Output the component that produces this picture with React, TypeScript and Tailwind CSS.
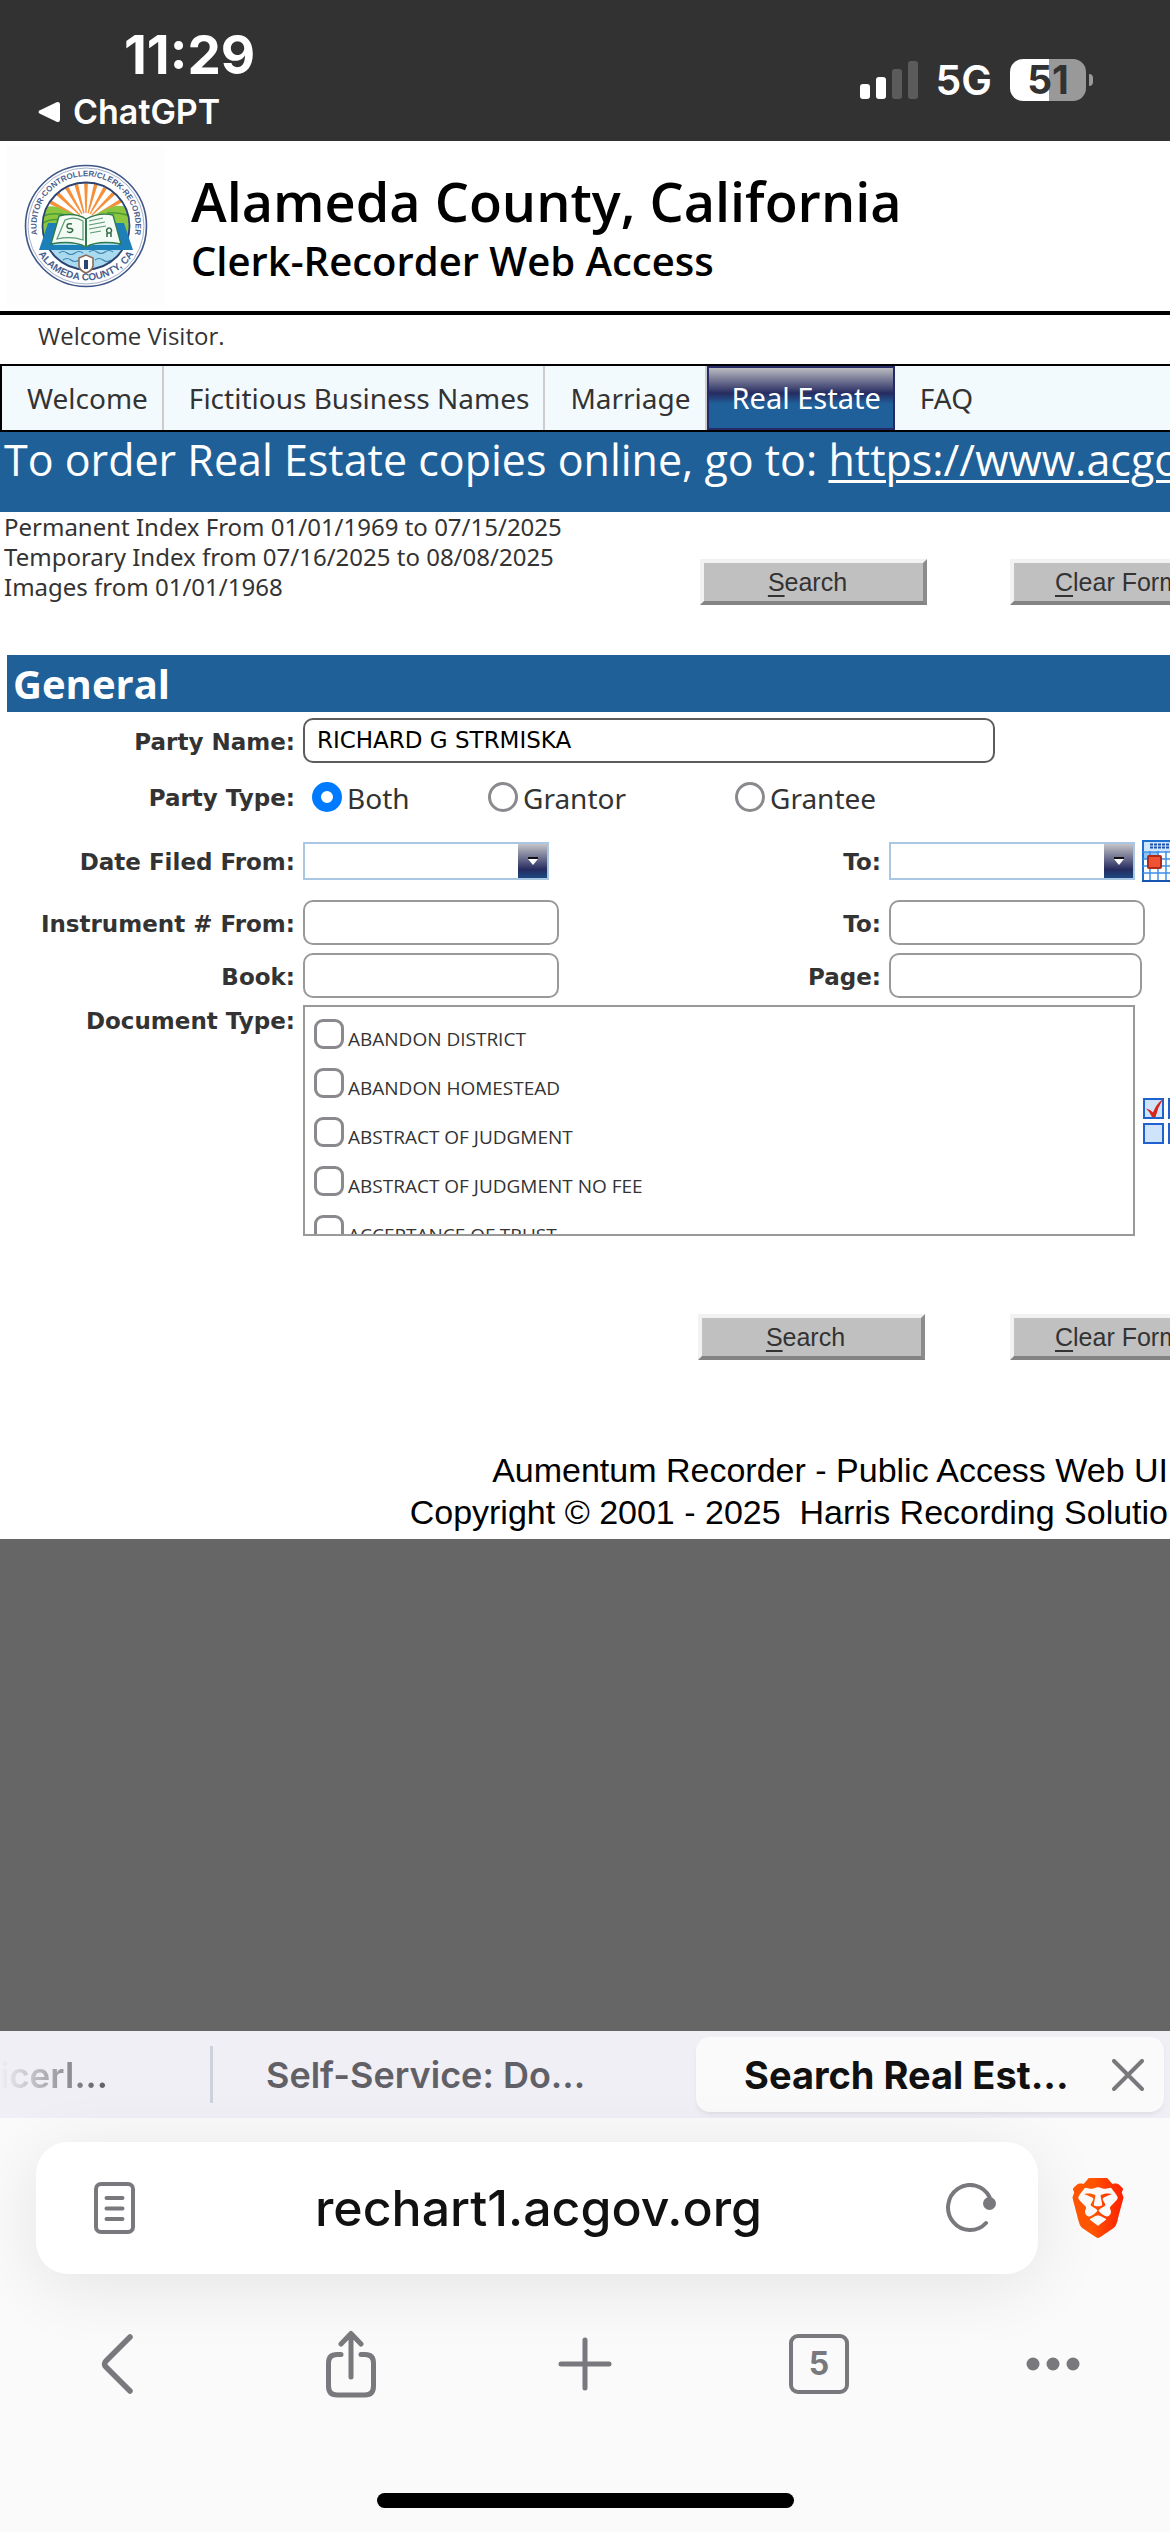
import React from "react";
import { SiBrave } from "react-icons/si";

const navItems = ["Welcome", "Fictitious Business Names", "Marriage", "Real Estate", "FAQ"];

const documentTypes = [
  "ABANDON DISTRICT",
  "ABANDON HOMESTEAD",
  "ABSTRACT OF JUDGMENT",
  "ABSTRACT OF JUDGMENT NO FEE",
  "ACCEPTANCE OF TRUST",
];

const labelClass =
  "pt-0.5 text-right font-['DejaVu_Sans',sans-serif] text-[23px] font-bold leading-7 text-[#333333]";
const textboxClass = "h-[45px] rounded-[10px] border-2 border-[#999999] bg-white outline-none";
const rowClass = "grid grid-cols-[295px_256px_314px_256px_auto] items-center gap-x-2";

function StatusBar() {
  return (
    <header className="flex h-[141px] shrink-0 justify-between bg-[#323232] font-['Inter',sans-serif] text-white">
      <div className="flex flex-col pt-[26px]">
        <time className="pl-[124px] text-[53px] font-bold leading-[58px]">11:29</time>
        <a href="#chatgpt" className="flex items-center gap-3 pl-[38px] pt-2 text-[34px] font-semibold leading-10">
          <svg width="23" height="22" viewBox="0 0 23 22" aria-hidden="true">
            <path d="M2 9.2 18.6 1.2Q22 0 22 3.500V18.500Q22 22 18.600 20.800L2 12.800Q-1 11 2 9.200Z" fill="white" />
          </svg>
          ChatGPT
        </a>
      </div>
      <div className="flex items-center pr-[77px] pt-[18px]">
        <svg width="58" height="38" viewBox="0 0 58 38" role="img" aria-label="Signal">
          <rect x="0" y="23" width="10" height="15" rx="3" fill="white" />
          <rect x="16" y="16" width="10" height="22" rx="3" fill="white" />
          <rect x="32" y="8" width="10" height="30" rx="3" fill="#5b5b5b" />
          <rect x="48" y="0" width="10" height="38" rx="3" fill="#5b5b5b" />
        </svg>
        <span className="ml-[18px] text-[41px] font-semibold leading-[42px]">5G</span>
        <div className="ml-[18px] flex h-[42px] w-[76px] items-center justify-center rounded-[13px] bg-[linear-gradient(90deg,#ffffff_51%,#999999_51%)] text-[39px] font-bold leading-[42px] text-[#323232]">
          51
        </div>
        <div className="ml-[3px] h-3 w-1 rounded-r-full bg-[#999999]" />
      </div>
    </header>
  );
}

function Seal() {
  const rays = [-78, -62, -46, -30, -15, 0, 15, 30, 45, 60, 75];
  return (
    <svg width="126" height="126" viewBox="0 0 126 126" role="img" aria-label="County seal">
      <defs>
        <path id="sealTop" d="M17 81A49.500 49.500 0 1 1 109 81" />
        <path id="sealBottom" d="M11 83A56.500 56.500 0 0 0 115 83" />
        <clipPath id="sealInner">
          <circle cx="63" cy="63" r="43" />
        </clipPath>
      </defs>
      <circle cx="63" cy="63" r="60.500" fill="white" stroke="#3f5688" strokeWidth="1.600" />
      <circle cx="63" cy="63" r="58" fill="none" stroke="#a4b0ca" strokeWidth="1" />
      <g clipPath="url(#sealInner)">
        <rect x="18" y="18" width="90" height="90" fill="white" />
        {rays.map((a) => (
          <path key={a} d="M62.400 50 60.600 8H65.400L63.600 50Z" fill="#f5913a" transform={`rotate(${a} 63 58)`} />
        ))}
        <path d="M18 46Q30 40 40 47Q50 49 56 56L56 76H18Z" fill="#8cc63f" />
        <path d="M108 46Q96 40 86 45Q76 48 70 55L70 76H108Z" fill="#8cc63f" />
        <path d="M18 54Q30 48 46 53M108 53Q96 49 84 50M20 60Q30 54 42 58" fill="none" stroke="#4a9a3c" strokeWidth="1.500" />
        <rect x="18" y="80" width="90" height="28" fill="#a9daf0" />
        <path d="M36 90q4-3 8 0t8 0t8 0M66 89q4-3 8 0t8 0t8 0M40 97q4-3 8 0t8 0M72 97q4-3 8 0t8 0" fill="none" stroke="#3d84ad" strokeWidth="1.200" />
      </g>
      <circle cx="63" cy="63" r="43.500" fill="none" stroke="#2c4472" strokeWidth="1.800" />
      <path d="M25 60H36L30 82H56Q60 82 63 84Q66 82 70 82H96L90 60H101L110 87H16Z" fill="#1c7fb8" />
      <path d="M36 53Q52 49 63 56Q76 49 90 52L98 81Q75 77 63 84Q50 77 28 81Z" fill="#f4fbf4" stroke="#2f7a4d" strokeWidth="1.400" />
      <path d="M63 56V83" stroke="#2f7a4d" strokeWidth="2" />
      <path d="M42 57Q52 53 60 58V77Q48 73 34 76ZM66 58L80 55M66 62L82 59M66 66L83 63M67 70L78 68" fill="none" stroke="#5c9a76" strokeWidth="1.200" />
      <path d="M49 61q-5-1-5 2t4 2.500q3 1 1 3t-5 0M86 65a2.500 2.500 0 1 0 .1 0M84 70v4M88 70v4" fill="none" stroke="#2f6b45" strokeWidth="1.500" />
      <path d="M56 95 63 92 70 95V103Q69 108 63 110Q57 108 56 103Z" fill="white" stroke="#8c6a5d" strokeWidth="1.600" />
      <path d="M61 97h4v9h-4z" fill="#2c4472" />
      <g fontFamily="Liberation Sans, sans-serif" fill="#4b5f8e">
        <text fontSize="8" fontWeight="700">
          <textPath href="#sealTop" startOffset="50%" textAnchor="middle">
            AUDITOR-CONTROLLER/CLERK-RECORDER
          </textPath>
        </text>
        <text fontSize="10" fontWeight="700">
          <textPath href="#sealBottom" startOffset="50%" textAnchor="middle">
            ALAMEDA COUNTY, CA
          </textPath>
        </text>
      </g>
    </svg>
  );
}

function SiteHeader() {
  return (
    <div className="flex h-[174px] border-b-4 border-black bg-white">
      <div className="ml-1.5 mt-[5px] flex h-40 w-[159px] items-center justify-center bg-[#fdfdfd]">
        <Seal />
      </div>
      <div className="whitespace-nowrap pl-[26px] pt-[30px] font-['Open_Sans',sans-serif] font-semibold text-black">
        <h1 className="text-[54px] leading-[60px]">Alameda County, California</h1>
        <h2 className="pt-[7px] text-[40px] leading-[46px]">Clerk-Recorder Web Access</h2>
      </div>
    </div>
  );
}

function SiteNav() {
  return (
    <nav className="flex h-[68px] overflow-hidden whitespace-nowrap border-y-2 border-l-2 border-black bg-[#f3fafe] font-['Noto_Sans',sans-serif] text-[28px] text-[#333333]">
      {navItems.map((item) =>
        item === "Real Estate" ? (
          <a
            key={item}
            href="#real-estate"
            aria-current="page"
            className="flex items-center border-2 border-[#242b66] bg-[linear-gradient(180deg,#bcbcc2_0%,#262b60_42%,#20609a_60%)] pl-[23px] pr-3 text-[29px] text-white"
          >
            {item}
          </a>
        ) : (
          <a
            key={item}
            href={"#" + item.toLowerCase().replace(/ /g, "-")}
            className="flex items-center border-r-2 border-[#cccccc] pl-[25px] pr-[14px] last:border-r-0"
          >
            {item}
          </a>
        ),
      )}
    </nav>
  );
}

function FormButton({ accessKey, rest }: { accessKey: string; rest: string }) {
  return (
    <button
      type="button"
      className="h-[46px] w-[227px] shrink-0 whitespace-nowrap border-4 border-b-[#848484] border-l-[#f2f2f2] border-r-[#8c8c8c] border-t-[#f2f2f2] bg-[#c0c0c0] pr-3 text-center font-['Liberation_Sans',Arial,sans-serif] text-[25px] leading-[34px] text-[#333333]"
    >
      <span className="underline decoration-2 underline-offset-4">{accessKey}</span>
      {rest}
    </button>
  );
}

function DateField({ id }: { id: string }) {
  return (
    <div className="flex h-[38px] w-[246px] shrink-0 border-2 border-[#a9c6e3] bg-white">
      <input id={id} type="text" className="min-w-0 flex-1 outline-none" />
      <button
        type="button"
        aria-label="Show dates"
        className="flex w-[29px] items-center justify-center bg-[linear-gradient(180deg,#c4c4c8_0%,#262b60_75%,#1d4a80_100%)]"
      >
        <svg width="10" height="8" viewBox="0 0 10 8" aria-hidden="true">
          <path d="M0 0H10V2H0Z" fill="#111111" />
          <path d="M0 2H10L5 8Z" fill="white" />
        </svg>
      </button>
    </div>
  );
}

function CalendarIcon() {
  const lines = [12, 19, 26, 33];
  return (
    <svg width="42" height="42" viewBox="0 0 42 42" aria-hidden="true">
      <rect x="1" y="1" width="40" height="40" fill="white" stroke="#1f6fd0" strokeWidth="2" />
      <rect x="2" y="2" width="38" height="9" fill="#cfe6fb" />
      <path d="M8 4.500H36M8 7.500H36" stroke="#1f4fae" strokeWidth="2" strokeDasharray="3 1" />
      <rect x="2" y="12" width="15" height="7" fill="#8fc3f5" />
      {lines.map((y) => (
        <path key={y} d={`M1 ${y}H41`} stroke="#3d8fe8" strokeWidth="1.500" />
      ))}
      {[8, 16, 24, 32].map((x) => (
        <path key={x} d={`M${x} 11V41`} stroke="#3d8fe8" strokeWidth="1.500" />
      ))}
      <rect x="6" y="16" width="13" height="12" rx="1" fill="#ee5336" stroke="#b02a17" strokeWidth="2" />
      <path d="M0 41H42" stroke="#1756b0" strokeWidth="2" />
    </svg>
  );
}

function CheckGridIcon() {
  const cells = [
    [1, 1],
    [26, 1],
    [1, 26],
    [26, 26],
  ];
  return (
    <svg width="46" height="46" viewBox="0 0 46 46" aria-hidden="true">
      {cells.map(([x, y]) => (
        <rect key={`${x}-${y}`} x={x} y={y} width="19" height="19" fill="#cfe3fa" stroke="#1f62cf" strokeWidth="2" />
      ))}
      <path d="M3 10.500 7 12 10 14.500Q13 6 20 1Q15 9 12.500 19H9Q7 14 3 10.500Z" fill="#d8261a" />
      <path d="M30 38H42" stroke="#d8261a" strokeWidth="2" />
    </svg>
  );
}

function Radio({ label, checked }: { label: string; checked?: boolean }) {
  return (
    <label className="flex items-center gap-[5px]">
      <input
        type="radio"
        name="partyType"
        defaultChecked={checked}
        className="h-[30px] w-[30px] appearance-none rounded-full border-3 border-[#8a8a8e] bg-white checked:border-[9px] checked:border-[#007aff]"
      />
      <span className="pt-0.5">{label}</span>
    </label>
  );
}

function SearchForm() {
  return (
    <form className="overflow-hidden bg-white">
      <div className="flex h-[143px]">
        <p className="w-[700px] shrink-0 pl-1 font-['Noto_Sans',sans-serif] text-[24px] leading-[30px] text-[#333333]">
          Permanent Index From 01/01/1969 to 07/15/2025
          <br />
          Temporary Index from 07/16/2025 to 08/08/2025
          <br />
          Images from 01/01/1968
        </p>
        <div className="flex gap-[83px] pt-[47px]">
          <FormButton accessKey="S" rest="earch" />
          <FormButton accessKey="C" rest="lear Form" />
        </div>
      </div>

      <h3 className="ml-[7px] h-[57px] bg-[#206099] pl-[6px] font-['Open_Sans',sans-serif] text-[40px] font-bold leading-[57px] text-white">
        General
      </h3>

      <div className={`mt-1.5 ${rowClass}`}>
        <label htmlFor="partyName" className={labelClass}>Party Name:</label>
        <input
          id="partyName"
          type="text"
          defaultValue="RICHARD G STRMISKA"
          className="col-span-4 h-[45px] w-[692px] rounded-[10px] border-2 border-[#5c5c5c] bg-white px-3 pb-0.5 font-['DejaVu_Sans',sans-serif] text-[23px] text-black outline-none"
        />
      </div>

      <div className={`h-[68px] ${rowClass}`}>
        <span id="partyTypeLabel" className={labelClass}>Party Type:</span>
        <div
          role="radiogroup"
          aria-labelledby="partyTypeLabel"
          className="col-span-4 grid grid-cols-[176px_247px_auto] pl-[9px] font-['Noto_Sans',sans-serif] text-[28px] leading-9 text-[#333333]"
        >
          <Radio label="Both" checked />
          <Radio label="Grantor" />
          <Radio label="Grantee" />
        </div>
      </div>

      <div className={`mt-[9px] ${rowClass}`}>
        <label htmlFor="dateFrom" className={labelClass}>Date Filed From:</label>
        <DateField id="dateFrom" />
        <label htmlFor="dateTo" className={labelClass}>To:</label>
        <div className="col-span-2 flex items-center gap-[7px]">
          <DateField id="dateTo" />
          <button type="button" aria-label="Open calendar" className="shrink-0">
            <CalendarIcon />
          </button>
        </div>
      </div>

      <div className={`mt-[18px] ${rowClass}`}>
        <label htmlFor="instrumentFrom" className={labelClass}>Instrument # From:</label>
        <input id="instrumentFrom" type="text" className={textboxClass} />
        <label htmlFor="instrumentTo" className={labelClass}>To:</label>
        <input id="instrumentTo" type="text" className={textboxClass} />
      </div>

      <div className={`mt-2 ${rowClass}`}>
        <label htmlFor="book" className={labelClass}>Book:</label>
        <input id="book" type="text" className={textboxClass} />
        <label htmlFor="page" className={labelClass}>Page:</label>
        <input id="page" type="text" className={`w-[253px] ${textboxClass}`} />
      </div>

      <div className="mt-[7px] flex gap-2">
        <span id="documentTypeLabel" className={`w-[295px] shrink-0 ${labelClass}`}>Document Type:</span>
        <div
          role="group"
          aria-labelledby="documentTypeLabel"
          className="h-[231px] w-[832px] shrink-0 overflow-hidden border-2 border-[#999999] pl-[9px] pt-3"
        >
          {documentTypes.map((name) => (
            <label
              key={name}
              className="flex h-[49px] gap-1 font-['Open_Sans',sans-serif] text-[19px] leading-10 text-[#333333]"
            >
              <input
                type="checkbox"
                className="h-[30px] w-[30px] appearance-none rounded-[9px] border-3 border-[#8a8a8e] bg-white"
              />
              {name}
            </label>
          ))}
        </div>
        <button type="button" aria-label="Select all document types" className="mt-[93px] h-[46px] shrink-0">
          <CheckGridIcon />
        </button>
      </div>

      <div className="flex gap-[85px] pl-[698px] pt-[78px]">
        <FormButton accessKey="S" rest="earch" />
        <FormButton accessKey="C" rest="lear Form" />
      </div>

      <footer className="whitespace-pre pb-1.5 pr-0.5 pt-[89px] text-right font-['Liberation_Sans',Arial,sans-serif] text-[34px] leading-[42px] text-black">
        <p>Aumentum Recorder - Public Access Web UI</p>
        <p>Copyright © 2001 - 2025  Harris Recording Solutio</p>
      </footer>
    </form>
  );
}

function TabStrip() {
  return (
    <div className="flex h-[87px] items-center overflow-hidden whitespace-nowrap bg-[#f0eff5] text-[36px] leading-[50px]">
      <button
        type="button"
        className="w-[210px] shrink-0 bg-[linear-gradient(90deg,#f0eff5_0px,#636368_100px)] bg-clip-text text-left text-[35px] font-semibold text-transparent"
      >
        icerI...
      </button>
      <div className="h-[57px] w-[3px] bg-[#ccd2dc]" />
      <button type="button" className="flex-1 pl-[53px] text-left font-semibold text-[#606066]">
        Self-Service: Do...
      </button>
      <div className="mr-1.5 flex h-[75px] w-[468px] items-center justify-between rounded-[14px] bg-[#fafafa] pl-12 pr-5 shadow-md shadow-black/5">
        <button type="button" className="text-[38px] font-bold text-[#111111]">Search Real Est...</button>
        <button type="button" aria-label="Close tab">
          <svg width="32" height="32" viewBox="0 0 32 32" aria-hidden="true">
            <path d="M2 2 30 30M30 2 2 30" stroke="#78787d" strokeWidth="4" strokeLinecap="round" />
          </svg>
        </button>
      </div>
    </div>
  );
}

function AddressRow() {
  return (
    <div className="flex pl-9 pt-6">
      <div className="flex h-[132px] flex-1 items-center justify-between rounded-[32px] bg-white pl-[58px] pr-[42px] shadow-[0_12px_70px_rgba(0,0,0,0.09)]">
        <button type="button" aria-label="Reader view">
          <svg width="41" height="52" viewBox="0 0 41 52" fill="none" stroke="#78787d" strokeWidth="4" strokeLinecap="round" aria-hidden="true">
            <rect x="2" y="2" width="37" height="48" rx="5" />
            <path d="M12.500 16H28.500M12.500 26.500H28.500M12.500 37H28.500" />
          </svg>
        </button>
        <button type="button" className="pr-1 text-[50px] font-medium leading-[60px] text-[#111111]">
          rechart1.acgov.org
        </button>
        <button type="button" aria-label="Reload">
          <svg width="50" height="50" viewBox="0 0 50 50" aria-hidden="true">
            <path d="M43.500 14A22 22.500 0 1 0 40 40" fill="none" stroke="#78787d" strokeWidth="4" strokeLinecap="round" />
            <circle cx="43.500" cy="20.500" r="6.500" fill="#78787d" />
          </svg>
        </button>
      </div>
      <button type="button" aria-label="Brave Shields" className="flex w-[132px] items-center justify-center pr-3">
        <svg width="0" height="0" aria-hidden="true">
          <defs>
            <linearGradient id="braveFill">
              <stop offset="0" stopColor="#ff5500" />
              <stop offset="0.400" stopColor="#ff5500" />
              <stop offset="0.600" stopColor="#ff4000" />
              <stop offset="1" stopColor="#ff2000" />
            </linearGradient>
          </defs>
        </svg>
        <SiBrave className="h-[60px] w-[60px]" fill="url(#braveFill)" />
      </button>
    </div>
  );
}

function Toolbar() {
  return (
    <div className="grid h-[180px] grid-cols-5 place-items-center">
      <button type="button" aria-label="Back">
        <svg width="32" height="60" viewBox="0 0 32 60" fill="none" stroke="#78787d" strokeWidth="5.500" strokeLinecap="round" strokeLinejoin="round" aria-hidden="true">
          <path d="M29 3 5 27Q2 30 5 33L29 57" />
        </svg>
      </button>
      <button type="button" aria-label="Share">
        <svg width="50" height="68" viewBox="0 0 50 68" fill="none" stroke="#78787d" strokeWidth="5" strokeLinecap="round" strokeLinejoin="round" aria-hidden="true">
          <path d="M15 24.500H11Q2.500 24.500 2.500 33V56Q2.500 65 11 65H39Q47.500 65 47.500 56V33Q47.500 24.500 39 24.500H35" />
          <path d="M25 47V4M15 14 25 3.500 35 14" />
        </svg>
      </button>
      <button type="button" aria-label="New tab">
        <svg width="54" height="54" viewBox="0 0 54 54" stroke="#78787d" strokeWidth="5" strokeLinecap="round" aria-hidden="true">
          <path d="M27 3V51M3 27H51" />
        </svg>
      </button>
      <button
        type="button"
        aria-label="5 open tabs"
        className="flex h-[60px] w-[60px] items-center justify-center rounded-[9px] border-4 border-[#78787d] text-[32px] font-bold leading-9 text-[#78787d]"
      >
        5
      </button>
      <button type="button" aria-label="More">
        <svg width="54" height="14" viewBox="0 0 54 14" fill="#78787d" aria-hidden="true">
          <circle cx="7" cy="7" r="6.500" />
          <circle cx="27" cy="7" r="6.500" />
          <circle cx="47" cy="7" r="6.500" />
        </svg>
      </button>
    </div>
  );
}

export default function App() {
  return (
    <div className="flex min-h-screen flex-col overflow-hidden bg-[#666666]">
      <StatusBar />
      <main className="bg-white">
        <SiteHeader />
        <p className="pb-2 pl-[38px] font-['Open_Sans',sans-serif] text-[24px] leading-[41px] text-[#333333]">
          Welcome Visitor.
        </p>
        <SiteNav />
        <p className="h-20 overflow-hidden whitespace-nowrap bg-[#206099] pl-1 font-['Open_Sans',sans-serif] text-[43px] leading-[56px] text-white">
          To order Real Estate copies online, go to:{" "}
          <a href="#acgov" className="underline decoration-3 underline-offset-4">https://www.acgov.org</a>
        </p>
        <SearchForm />
      </main>
      <div className="flex-1" />
      <div className="bg-[#fafafa] font-['Inter',sans-serif]">
        <TabStrip />
        <AddressRow />
        <Toolbar />
        <div className="mx-auto mb-6 mt-[39px] h-[15px] w-[417px] rounded-full bg-black" />
      </div>
    </div>
  );
}
